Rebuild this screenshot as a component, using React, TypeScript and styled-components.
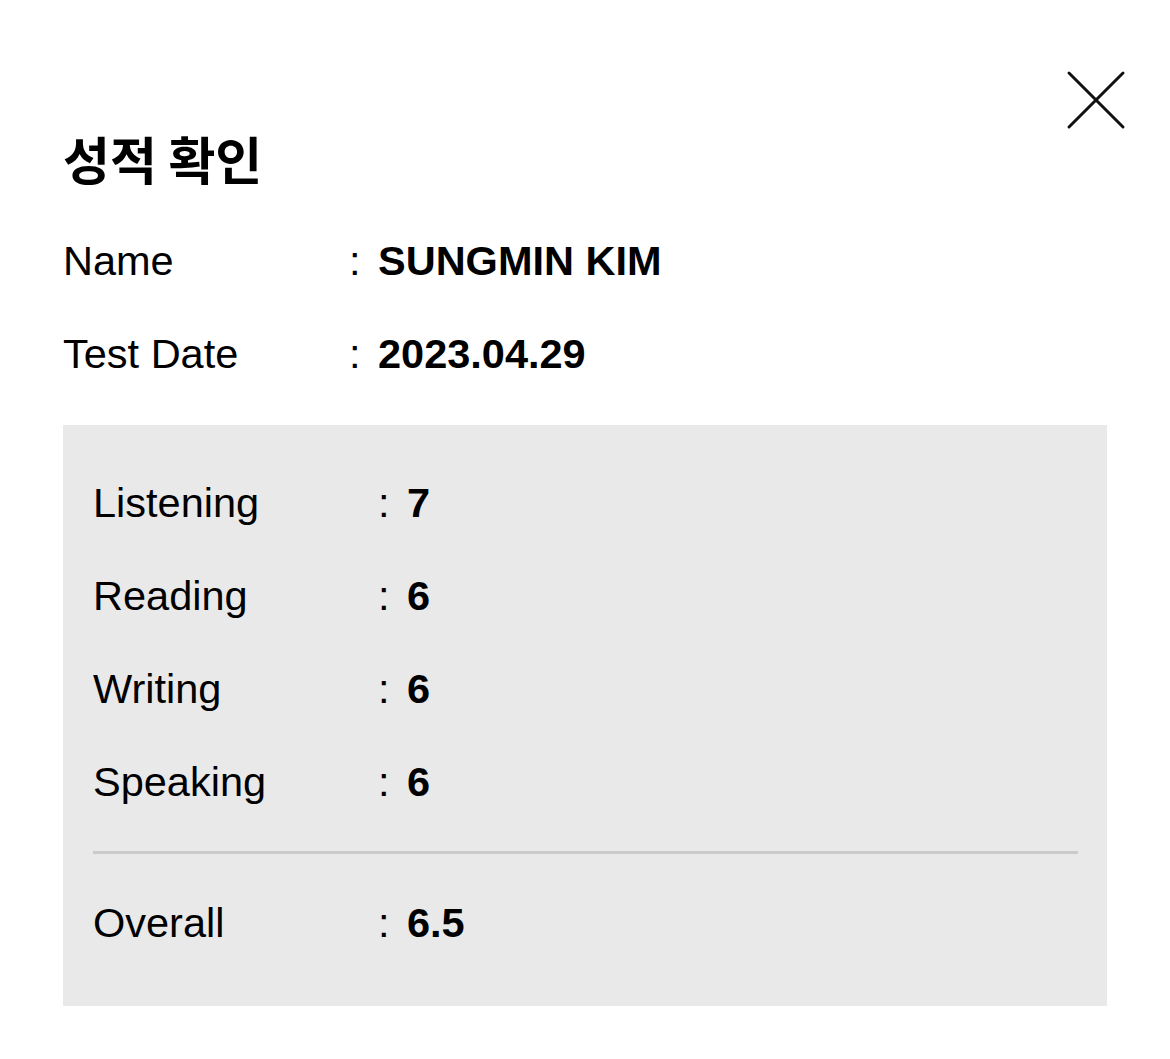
import React from "react";
import styled, { createGlobalStyle } from "styled-components";

const Global = createGlobalStyle`
  html, body { margin: 0; padding: 0; background: #ffffff; }
  body { font-family: "Liberation Sans", Arial, "Noto Sans CJK KR", sans-serif; color: #000; }
`;

const Page = styled.div`
  position: relative;
  width: 1170px;
  min-height: 1059px;
  box-sizing: border-box;
  padding: 126px 63px 0 63px;
`;

const CloseButton = styled.button`
  position: absolute;
  top: 70px;
  right: 44px;
  width: 60px;
  height: 60px;
  padding: 0;
  border: none;
  background: transparent;
  cursor: pointer;
  display: flex;
  align-items: center;
  justify-content: center;
`;

const Title = styled.h1`
  margin: 0;
  font-family: "Noto Sans CJK KR", sans-serif;
  font-weight: 700;
  font-size: 51px;
  line-height: 64px;
`;

const InfoList = styled.div`
  margin-top: 47px;
  display: flex;
  flex-direction: column;
  gap: 45px;
`;

const Row = styled.div<{ $labelWidth: number }>`
  display: grid;
  grid-template-columns: ${(p) => p.$labelWidth}px auto 1fr;
  align-items: center;
  font-size: 41.5px;
  line-height: 48px;
`;

const Label = styled.span`
  font-weight: 400;
`;

const Colon = styled.span`
  width: 29px;
`;

const Value = styled.span`
  font-weight: 700;
`;

const ScoreBox = styled.div`
  margin-top: 47px;
  width: 1044px;
  box-sizing: border-box;
  background: #e9e9e9;
  padding: 54px 29px 59px 30px;
`;

const ScoreList = styled.div`
  display: flex;
  flex-direction: column;
  gap: 45px;
`;

const Divider = styled.hr`
  margin: 45px 0 45px 0;
  border: none;
  height: 3px;
  background: #cbcbcb;
`;

const scores = [
  { label: "Listening", value: "7" },
  { label: "Reading", value: "6" },
  { label: "Writing", value: "6" },
  { label: "Speaking", value: "6" },
];

export default function App() {
  return (
    <>
      <Global />
      <Page>
        <CloseButton aria-label="close">
          <svg width="60" height="60" viewBox="0 0 60 60">
            <path d="M3 3 L57 57 M57 3 L3 57" stroke="#111" strokeWidth="3" strokeLinecap="round" fill="none" />
          </svg>
        </CloseButton>
        <Title>성적 확인</Title>
        <InfoList>
          <Row $labelWidth={286}>
            <Label>Name</Label>
            <Colon>:</Colon>
            <Value>SUNGMIN KIM</Value>
          </Row>
          <Row $labelWidth={286}>
            <Label>Test Date</Label>
            <Colon>:</Colon>
            <Value>2023.04.29</Value>
          </Row>
        </InfoList>
        <ScoreBox>
          <ScoreList>
            {scores.map((s) => (
              <Row key={s.label} $labelWidth={285}>
                <Label>{s.label}</Label>
                <Colon>:</Colon>
                <Value>{s.value}</Value>
              </Row>
            ))}
          </ScoreList>
          <Divider />
          <Row $labelWidth={285}>
            <Label>Overall</Label>
            <Colon>:</Colon>
            <Value>6.5</Value>
          </Row>
        </ScoreBox>
      </Page>
    </>
  );
}
